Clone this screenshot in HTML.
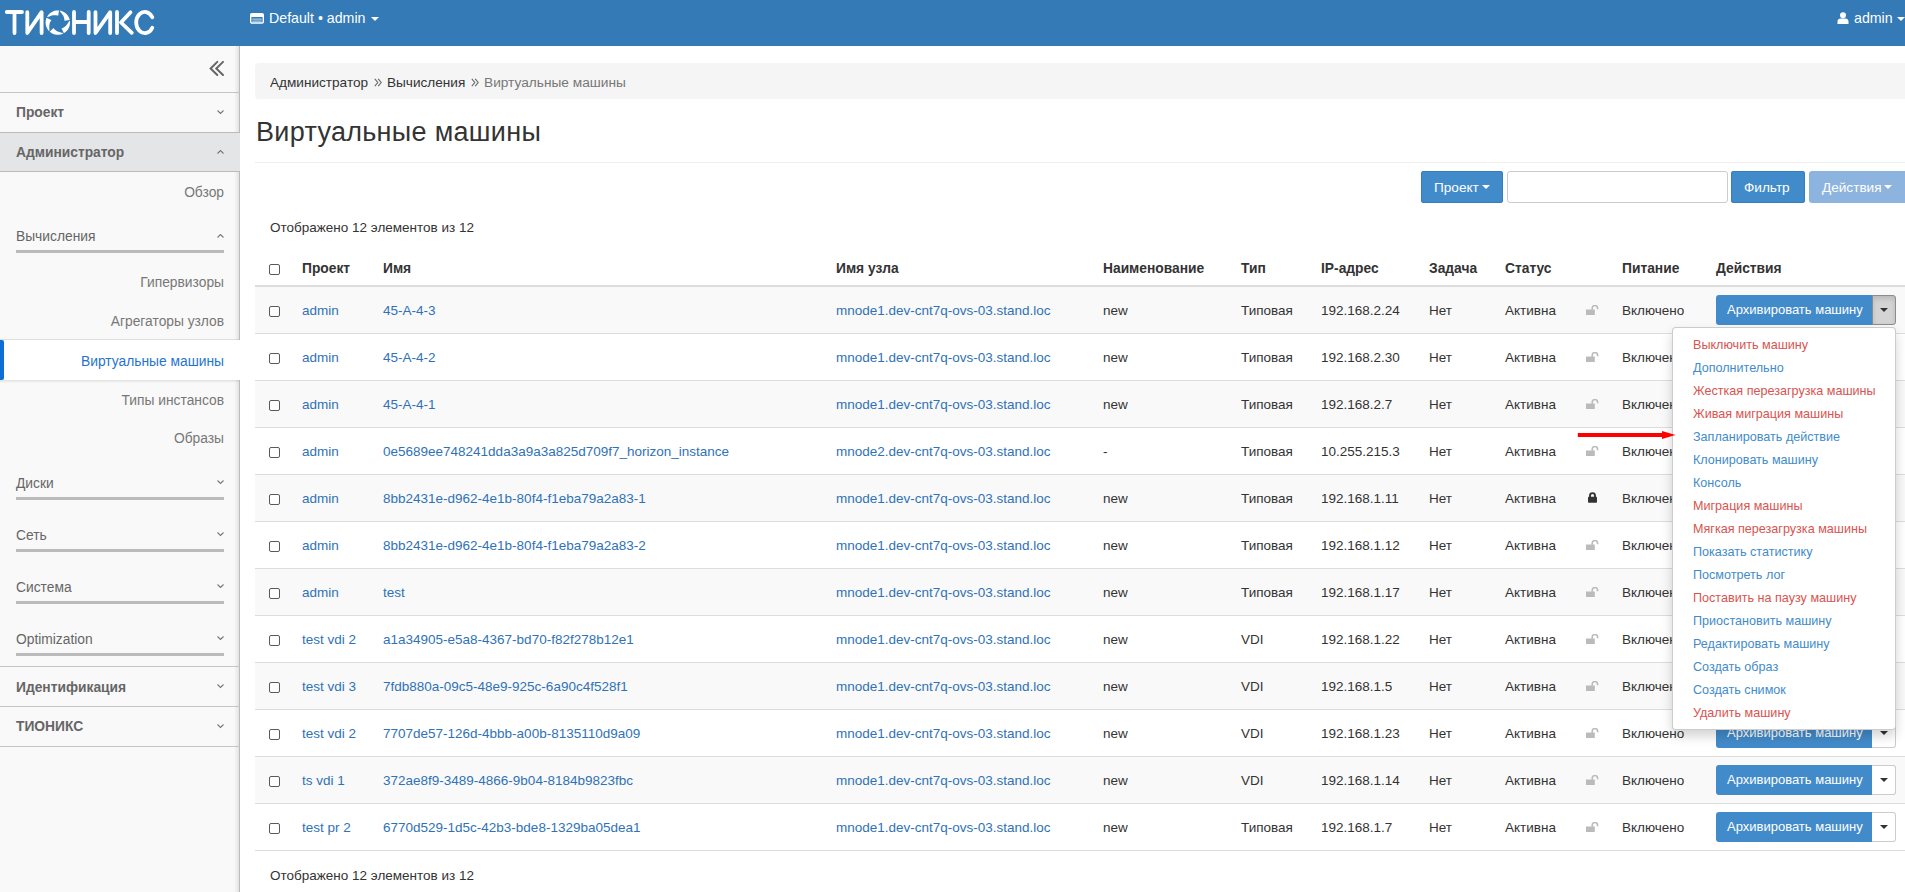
<!DOCTYPE html>
<html><head><meta charset="utf-8"><title>Виртуальные машины</title>
<style>
html,body{margin:0;padding:0;}
body{width:1905px;height:892px;overflow:hidden;position:relative;background:#fff;font-family:"Liberation Sans", sans-serif;}
.t{position:absolute;white-space:nowrap;line-height:1.15;}
</style></head><body>
<div style="position:absolute;left:0px;top:0px;width:1905px;height:46px;background:#337ab7"></div><svg style="position:absolute;left:0;top:0" width="170" height="46" viewBox="0 0 170 46">
<g stroke="#fff" stroke-width="3.8" stroke-linecap="round" stroke-linejoin="round" fill="none">
<path d="M6.8,12 H22 M14.5,12 V33"/>
<path d="M27.3,12.2 V33 L41.6,12.2 V33"/>
<path d="M74,12 V33 M88.7,12 V33 M74,22 H88.7"/>
<path d="M95.5,12.2 V33 L110.2,12.2 V33"/>
<path d="M117,12 V33 M130.5,12.3 L121,22.5 L131.8,32.8"/>
<path d="M152.3,17.3 A8.6,10.6 0 1 0 152.3,27.7"/>
</g>
<path fill="#fff" d="M46.93,17.06 L47.45,16.15 L48.04,15.28 L48.70,14.47 L49.44,13.72 L50.23,13.03 L51.08,12.42 L51.98,11.88 L52.92,11.42 L53.90,11.04 L54.91,10.75 L55.94,10.54 L56.98,10.43 L58.03,10.40 L59.08,10.47 L58.16,15.81 L57.59,15.59 L56.99,15.41 L56.36,15.27 L55.69,15.18 L55.00,15.14 L54.28,15.16 L53.54,15.23 L52.78,15.36 L52.00,15.54 L51.19,15.79 L50.36,16.10 L49.47,16.46 L48.50,16.85 L46.93,17.06Z M59.71,10.55 L60.74,10.76 L61.74,11.05 L62.72,11.44 L63.66,11.90 L64.56,12.44 L65.41,13.06 L66.20,13.75 L66.93,14.50 L67.59,15.32 L68.18,16.19 L68.69,17.10 L69.12,18.06 L69.47,19.05 L69.73,20.06 L64.37,20.84 L64.40,20.23 L64.39,19.61 L64.33,18.96 L64.20,18.30 L64.03,17.63 L63.79,16.96 L63.50,16.27 L63.14,15.59 L62.72,14.90 L62.23,14.21 L61.69,13.51 L61.07,12.78 L60.39,11.98 L59.71,10.55Z M69.85,20.69 L69.97,21.73 L70.00,22.78 L69.94,23.83 L69.79,24.87 L69.55,25.89 L69.22,26.89 L68.81,27.85 L68.32,28.78 L67.75,29.66 L67.11,30.49 L66.39,31.26 L65.62,31.97 L64.79,32.60 L63.90,33.17 L61.50,28.30 L62.09,28.15 L62.68,27.94 L63.28,27.68 L63.87,27.36 L64.45,26.99 L65.02,26.55 L65.58,26.06 L66.12,25.51 L66.64,24.90 L67.15,24.22 L67.65,23.49 L68.15,22.68 L68.70,21.78 L69.85,20.69Z M63.34,33.47 L62.38,33.91 L61.40,34.26 L60.38,34.52 L59.35,34.70 L58.30,34.79 L57.25,34.79 L56.21,34.70 L55.17,34.51 L54.16,34.24 L53.17,33.89 L52.22,33.45 L51.31,32.93 L50.45,32.33 L49.64,31.67 L53.52,27.88 L53.85,28.40 L54.23,28.90 L54.66,29.38 L55.14,29.84 L55.68,30.28 L56.27,30.69 L56.91,31.07 L57.60,31.41 L58.35,31.72 L59.14,31.99 L60.00,32.24 L60.92,32.47 L61.95,32.72 L63.34,33.47Z M49.17,31.23 L48.46,30.45 L47.82,29.62 L47.26,28.74 L46.77,27.81 L46.36,26.84 L46.04,25.85 L45.80,24.82 L45.66,23.78 L45.60,22.74 L45.63,21.69 L45.76,20.65 L45.97,19.62 L46.27,18.61 L46.65,17.64 L51.45,20.16 L51.07,20.63 L50.71,21.15 L50.38,21.71 L50.09,22.31 L49.84,22.96 L49.64,23.64 L49.47,24.37 L49.36,25.13 L49.30,25.94 L49.28,26.78 L49.31,27.67 L49.38,28.62 L49.46,29.67 L49.17,31.23Z"/>
</svg><svg style="position:absolute;left:250px;top:12.6px" width="14" height="11" viewBox="0 0 14 11"><rect x="0.7" y="0.7" width="12.6" height="9.3" rx="1.2" fill="none" stroke="#fff" stroke-width="1.4"/><rect x="0.7" y="0.7" width="12.6" height="3.2" rx="1" fill="#fff"/><rect x="2.3" y="5.6" width="9.4" height="1" fill="#fff" opacity="0.75"/><rect x="2.3" y="7.6" width="9.4" height="1" fill="#fff" opacity="0.75"/></svg><div class="t" style="left:269px;top:10.31px;font-size:14.2px;color:#fff;font-weight:normal;">Default • admin</div><div style="position:absolute;left:371px;top:16.8px;width:0;height:0;border-left:4px solid transparent;border-right:4px solid transparent;border-top:4px solid #fff"></div><svg style="position:absolute;left:1837px;top:12px" width="12" height="12" viewBox="0 0 12 12"><circle cx="6" cy="3.2" r="3" fill="#fff"/><path d="M0.5,12 V9.5 C0.5,7.5 2,6.5 3.5,6.5 H8.5 C10,6.5 11.5,7.5 11.5,9.5 V12 Z" fill="#fff"/></svg><div class="t" style="left:1854px;top:10.21px;font-size:14.2px;color:#fff;font-weight:normal;">admin</div><div style="position:absolute;left:1896.8px;top:16.8px;width:0;height:0;border-left:4px solid transparent;border-right:4px solid transparent;border-top:4px solid #fff"></div><div style="position:absolute;left:0px;top:46px;width:239px;height:846px;background:#f9f9f9"></div><div style="position:absolute;left:239px;top:46px;width:1px;height:846px;background:#bbb"></div><div style="position:absolute;left:234px;top:46px;width:5px;height:846px;background:linear-gradient(to right, rgba(0,0,0,0), rgba(0,0,0,0.09))"></div><svg style="position:absolute;left:209px;top:60px" width="17" height="17" viewBox="0 0 17 17"><g stroke="#666" stroke-width="2" fill="none" stroke-linecap="round"><path d="M8.3,1.9 L1.6,8.45 L8.3,15"/><path d="M14,1.9 L7.3,8.45 L14,15"/></g></svg><div style="position:absolute;left:0px;top:92px;width:240px;height:1px;background:#c4c4c4"></div><div class="t" style="left:16px;top:105.08px;font-size:13.8px;color:#666;font-weight:bold;">Проект</div><svg style="position:absolute;left:217px;top:109.5px" width="7" height="4.5" viewBox="0 0 7 4.5"><path d="M0.5,0.5 L3.5,3.5 L6.5,0.5" stroke="#777" stroke-width="1.1" fill="none"/></svg><div style="position:absolute;left:0px;top:132px;width:240px;height:1px;background:#bbb"></div><div style="position:absolute;left:0px;top:133px;width:240px;height:38px;background:#e4e5e7"></div><div class="t" style="left:16px;top:144.98px;font-size:13.8px;color:#666;font-weight:bold;">Администратор</div><svg style="position:absolute;left:217px;top:149.5px" width="7" height="4.5" viewBox="0 0 7 4.5"><path d="M0.5,3.5 L3.5,0.5 L6.5,3.5" stroke="#777" stroke-width="1.1" fill="none"/></svg><div style="position:absolute;left:0px;top:171px;width:240px;height:1px;background:#bbb"></div><div class="t" style="right:1681px;top:184.78px;font-size:13.8px;color:#777;font-weight:normal;">Обзор</div><div class="t" style="left:16px;top:228.98px;font-size:13.8px;color:#666;font-weight:normal;">Вычисления</div><svg style="position:absolute;left:217px;top:233.5px" width="7" height="4.5" viewBox="0 0 7 4.5"><path d="M0.5,3.5 L3.5,0.5 L6.5,3.5" stroke="#777" stroke-width="1.1" fill="none"/></svg><div style="position:absolute;left:16px;top:250px;width:208px;height:3px;background:#bbb"></div><div class="t" style="right:1681px;top:274.78px;font-size:13.8px;color:#777;font-weight:normal;">Гипервизоры</div><div class="t" style="right:1681px;top:313.78px;font-size:13.8px;color:#777;font-weight:normal;">Агрегаторы узлов</div><div style="position:absolute;left:0px;top:340px;width:256px;height:40px;background:#fff"></div><div style="position:absolute;left:0px;top:339px;width:239px;height:1px;background:rgba(0,0,0,.10)"></div><div style="position:absolute;left:0px;top:380px;width:239px;height:3px;background:linear-gradient(rgba(0,0,0,.10),rgba(0,0,0,0))"></div><div style="position:absolute;left:0px;top:340px;width:4px;height:40px;background:#0d6fd6;border-radius:0 2px 2px 0"></div><div class="t" style="right:1681px;top:353.58px;font-size:13.8px;color:#1f74d1;font-weight:normal;">Виртуальные машины</div><div class="t" style="right:1681px;top:393.18px;font-size:13.8px;color:#777;font-weight:normal;">Типы инстансов</div><div class="t" style="right:1681px;top:431.38px;font-size:13.8px;color:#777;font-weight:normal;">Образы</div><div class="t" style="left:16px;top:476.08px;font-size:13.8px;color:#666;font-weight:normal;">Диски</div><svg style="position:absolute;left:217px;top:480.1px" width="7" height="4.5" viewBox="0 0 7 4.5"><path d="M0.5,0.5 L3.5,3.5 L6.5,0.5" stroke="#777" stroke-width="1.1" fill="none"/></svg><div style="position:absolute;left:16px;top:497px;width:208px;height:3px;background:#bbb"></div><div class="t" style="left:16px;top:528.28px;font-size:13.8px;color:#666;font-weight:normal;">Сеть</div><svg style="position:absolute;left:217px;top:532.3px" width="7" height="4.5" viewBox="0 0 7 4.5"><path d="M0.5,0.5 L3.5,3.5 L6.5,0.5" stroke="#777" stroke-width="1.1" fill="none"/></svg><div style="position:absolute;left:16px;top:549px;width:208px;height:3px;background:#bbb"></div><div class="t" style="left:16px;top:579.68px;font-size:13.8px;color:#666;font-weight:normal;">Система</div><svg style="position:absolute;left:217px;top:583.7px" width="7" height="4.5" viewBox="0 0 7 4.5"><path d="M0.5,0.5 L3.5,3.5 L6.5,0.5" stroke="#777" stroke-width="1.1" fill="none"/></svg><div style="position:absolute;left:16px;top:601px;width:208px;height:3px;background:#bbb"></div><div class="t" style="left:16px;top:631.88px;font-size:13.8px;color:#666;font-weight:normal;">Optimization</div><svg style="position:absolute;left:217px;top:635.9px" width="7" height="4.5" viewBox="0 0 7 4.5"><path d="M0.5,0.5 L3.5,3.5 L6.5,0.5" stroke="#777" stroke-width="1.1" fill="none"/></svg><div style="position:absolute;left:16px;top:653px;width:208px;height:3px;background:#bbb"></div><div style="position:absolute;left:0px;top:666px;width:240px;height:1px;background:#c4c4c4"></div><div class="t" style="left:16px;top:679.68px;font-size:13.8px;color:#666;font-weight:bold;">Идентификация</div><svg style="position:absolute;left:217px;top:684px" width="7" height="4.5" viewBox="0 0 7 4.5"><path d="M0.5,0.5 L3.5,3.5 L6.5,0.5" stroke="#777" stroke-width="1.1" fill="none"/></svg><div style="position:absolute;left:0px;top:706px;width:240px;height:1px;background:#c4c4c4"></div><div class="t" style="left:16px;top:719.38px;font-size:13.8px;color:#666;font-weight:bold;">ТИОНИКС</div><svg style="position:absolute;left:217px;top:724px" width="7" height="4.5" viewBox="0 0 7 4.5"><path d="M0.5,0.5 L3.5,3.5 L6.5,0.5" stroke="#777" stroke-width="1.1" fill="none"/></svg><div style="position:absolute;left:0px;top:746px;width:240px;height:1px;background:#c4c4c4"></div><div style="position:absolute;left:255px;top:63px;width:1680px;height:36px;background:#f5f5f5;border-radius:4px"></div><div class="t" style="left:270px;top:75.27px;font-size:13.6px;color:#333;font-weight:normal;">Администратор</div><svg style="position:absolute;left:374px;top:78px" width="8" height="9" viewBox="0 0 8 9"><g stroke="#666" stroke-width="1.1" fill="none"><path d="M0.8,0.8 L3.8,4.5 L0.8,8.2"/><path d="M4.2,0.8 L7.2,4.5 L4.2,8.2"/></g></svg><div class="t" style="left:387px;top:75.27px;font-size:13.6px;color:#333;font-weight:normal;">Вычисления</div><svg style="position:absolute;left:471px;top:78px" width="8" height="9" viewBox="0 0 8 9"><g stroke="#666" stroke-width="1.1" fill="none"><path d="M0.8,0.8 L3.8,4.5 L0.8,8.2"/><path d="M4.2,0.8 L7.2,4.5 L4.2,8.2"/></g></svg><div class="t" style="left:484px;top:75.18px;font-size:13.7px;color:#777;font-weight:normal;">Виртуальные машины</div><div class="t" style="left:256px;top:116.92px;font-size:27px;color:#333;font-weight:normal;letter-spacing:0.3px">Виртуальные машины</div><div style="position:absolute;left:255px;top:162px;width:1680px;height:1px;background:#eee"></div><div style="position:absolute;left:1421px;top:171px;width:82px;height:32px;background:#428bca;border-radius:3px;box-shadow:inset 0 0 0 1px #357ebd"></div><div class="t" style="left:1434px;top:180.47px;font-size:13.6px;color:#fff;font-weight:normal;">Проект</div><div style="position:absolute;left:1482px;top:185px;border-left:4px solid transparent;border-right:4px solid transparent;border-top:4px solid #fff"></div><div style="position:absolute;left:1507px;top:171px;width:221px;height:32px;box-sizing:border-box;border:1px solid #ccc;border-radius:3px;background:#fff"></div><div style="position:absolute;left:1731px;top:171px;width:74px;height:32px;background:#428bca;border-radius:3px;box-shadow:inset 0 0 0 1px #357ebd"></div><div class="t" style="left:1744px;top:180.47px;font-size:13.6px;color:#fff;font-weight:normal;">Фильтр</div><div style="position:absolute;left:1809px;top:171px;width:110px;height:32px;background:#8db4de;border-radius:3px"></div><div class="t" style="left:1822px;top:180.47px;font-size:13.6px;color:#fff;font-weight:normal;">Действия</div><div style="position:absolute;left:1884px;top:185px;border-left:4px solid transparent;border-right:4px solid transparent;border-top:4px solid #fff"></div><div class="t" style="left:270px;top:219.86px;font-size:13.5px;color:#333;font-weight:normal;">Отображено 12 элементов из 12</div><div style="position:absolute;left:269.3px;top:264.3px;width:10.5px;height:10.5px;box-sizing:border-box;border:1px solid #5a5a5a;border-radius:2px;background:#fff"></div><div class="t" style="left:302px;top:261.28px;font-size:13.8px;color:#333;font-weight:bold;">Проект</div><div class="t" style="left:383px;top:261.28px;font-size:13.8px;color:#333;font-weight:bold;">Имя</div><div class="t" style="left:836px;top:261.28px;font-size:13.8px;color:#333;font-weight:bold;">Имя узла</div><div class="t" style="left:1103px;top:261.28px;font-size:13.8px;color:#333;font-weight:bold;">Наименование</div><div class="t" style="left:1241px;top:261.28px;font-size:13.8px;color:#333;font-weight:bold;">Тип</div><div class="t" style="left:1321px;top:261.28px;font-size:13.8px;color:#333;font-weight:bold;">IP-адрес</div><div class="t" style="left:1429px;top:261.28px;font-size:13.8px;color:#333;font-weight:bold;">Задача</div><div class="t" style="left:1505px;top:261.28px;font-size:13.8px;color:#333;font-weight:bold;">Статус</div><div class="t" style="left:1622px;top:261.28px;font-size:13.8px;color:#333;font-weight:bold;">Питание</div><div class="t" style="left:1716px;top:261.28px;font-size:13.8px;color:#333;font-weight:bold;">Действия</div><div style="position:absolute;left:255px;top:285px;width:1680px;height:2px;background:#ddd"></div><div style="position:absolute;left:255px;top:287px;width:1680px;height:46px;background:#f9f9f9"></div><div style="position:absolute;left:255px;top:333px;width:1680px;height:1px;background:#ddd"></div><div style="position:absolute;left:269.3px;top:306.3px;width:10.5px;height:10.5px;box-sizing:border-box;border:1px solid #5a5a5a;border-radius:2px;background:#fff"></div><div class="t" style="left:302px;top:303.26px;font-size:13.5px;color:#2f72b6;font-weight:normal;">admin</div><div class="t" style="left:383px;top:303.26px;font-size:13.5px;color:#2f72b6;font-weight:normal;">45-A-4-3</div><div class="t" style="left:836px;top:303.26px;font-size:13.5px;color:#2f72b6;font-weight:normal;">mnode1.dev-cnt7q-ovs-03.stand.loc</div><div class="t" style="left:1103px;top:303.26px;font-size:13.5px;color:#333;font-weight:normal;">new</div><div class="t" style="left:1241px;top:303.26px;font-size:13.5px;color:#333;font-weight:normal;">Типовая</div><div class="t" style="left:1321px;top:303.26px;font-size:13.5px;color:#333;font-weight:normal;">192.168.2.24</div><div class="t" style="left:1429px;top:303.26px;font-size:13.5px;color:#333;font-weight:normal;">Нет</div><div class="t" style="left:1505px;top:303.26px;font-size:13.5px;color:#333;font-weight:normal;">Активна</div><svg style="position:absolute;left:1586px;top:304.6px" width="13" height="10" viewBox="0 0 13 10"><rect x="0" y="4.5" width="8.8" height="5.5" fill="#bbb"/><path d="M6.2,4.8 V3.2 A2.7,2.7 0 0 1 11.6,3.2 V4.3" stroke="#bbb" stroke-width="1.6" fill="none"/></svg><div class="t" style="left:1622px;top:303.26px;font-size:13.5px;color:#333;font-weight:normal;">Включено</div><div style="position:absolute;left:1716px;top:295px;width:157px;height:30px;background:#428bca;border-radius:3px 0 0 3px"></div><div class="t" style="left:1727px;top:303.02px;font-size:13.0px;color:#fff;font-weight:normal;">Архивировать машину</div><div style="position:absolute;left:1872px;top:295px;width:24px;height:30px;box-sizing:border-box;background:#d4d4d4;border:1px solid #ccc;border-left:none;border-radius:0 3px 3px 0;box-shadow:inset 0 3px 5px rgba(0,0,0,.125);border:1px solid #8c8c8c"></div><div style="position:absolute;left:1880px;top:308px;border-left:4px solid transparent;border-right:4px solid transparent;border-top:4px solid #333"></div><div style="position:absolute;left:255px;top:380px;width:1680px;height:1px;background:#ddd"></div><div style="position:absolute;left:269.3px;top:353.3px;width:10.5px;height:10.5px;box-sizing:border-box;border:1px solid #5a5a5a;border-radius:2px;background:#fff"></div><div class="t" style="left:302px;top:350.26px;font-size:13.5px;color:#2f72b6;font-weight:normal;">admin</div><div class="t" style="left:383px;top:350.26px;font-size:13.5px;color:#2f72b6;font-weight:normal;">45-A-4-2</div><div class="t" style="left:836px;top:350.26px;font-size:13.5px;color:#2f72b6;font-weight:normal;">mnode1.dev-cnt7q-ovs-03.stand.loc</div><div class="t" style="left:1103px;top:350.26px;font-size:13.5px;color:#333;font-weight:normal;">new</div><div class="t" style="left:1241px;top:350.26px;font-size:13.5px;color:#333;font-weight:normal;">Типовая</div><div class="t" style="left:1321px;top:350.26px;font-size:13.5px;color:#333;font-weight:normal;">192.168.2.30</div><div class="t" style="left:1429px;top:350.26px;font-size:13.5px;color:#333;font-weight:normal;">Нет</div><div class="t" style="left:1505px;top:350.26px;font-size:13.5px;color:#333;font-weight:normal;">Активна</div><svg style="position:absolute;left:1586px;top:351.6px" width="13" height="10" viewBox="0 0 13 10"><rect x="0" y="4.5" width="8.8" height="5.5" fill="#bbb"/><path d="M6.2,4.8 V3.2 A2.7,2.7 0 0 1 11.6,3.2 V4.3" stroke="#bbb" stroke-width="1.6" fill="none"/></svg><div class="t" style="left:1622px;top:350.26px;font-size:13.5px;color:#333;font-weight:normal;">Включено</div><div style="position:absolute;left:1716px;top:342px;width:157px;height:30px;background:#428bca;border-radius:3px 0 0 3px"></div><div class="t" style="left:1727px;top:350.02px;font-size:13.0px;color:#fff;font-weight:normal;">Архивировать машину</div><div style="position:absolute;left:1872px;top:342px;width:24px;height:30px;box-sizing:border-box;background:#fff;border:1px solid #ccc;border-left:none;border-radius:0 3px 3px 0;"></div><div style="position:absolute;left:1880px;top:355px;border-left:4px solid transparent;border-right:4px solid transparent;border-top:4px solid #333"></div><div style="position:absolute;left:255px;top:381px;width:1680px;height:46px;background:#f9f9f9"></div><div style="position:absolute;left:255px;top:427px;width:1680px;height:1px;background:#ddd"></div><div style="position:absolute;left:269.3px;top:400.3px;width:10.5px;height:10.5px;box-sizing:border-box;border:1px solid #5a5a5a;border-radius:2px;background:#fff"></div><div class="t" style="left:302px;top:397.26px;font-size:13.5px;color:#2f72b6;font-weight:normal;">admin</div><div class="t" style="left:383px;top:397.26px;font-size:13.5px;color:#2f72b6;font-weight:normal;">45-A-4-1</div><div class="t" style="left:836px;top:397.26px;font-size:13.5px;color:#2f72b6;font-weight:normal;">mnode1.dev-cnt7q-ovs-03.stand.loc</div><div class="t" style="left:1103px;top:397.26px;font-size:13.5px;color:#333;font-weight:normal;">new</div><div class="t" style="left:1241px;top:397.26px;font-size:13.5px;color:#333;font-weight:normal;">Типовая</div><div class="t" style="left:1321px;top:397.26px;font-size:13.5px;color:#333;font-weight:normal;">192.168.2.7</div><div class="t" style="left:1429px;top:397.26px;font-size:13.5px;color:#333;font-weight:normal;">Нет</div><div class="t" style="left:1505px;top:397.26px;font-size:13.5px;color:#333;font-weight:normal;">Активна</div><svg style="position:absolute;left:1586px;top:398.6px" width="13" height="10" viewBox="0 0 13 10"><rect x="0" y="4.5" width="8.8" height="5.5" fill="#bbb"/><path d="M6.2,4.8 V3.2 A2.7,2.7 0 0 1 11.6,3.2 V4.3" stroke="#bbb" stroke-width="1.6" fill="none"/></svg><div class="t" style="left:1622px;top:397.26px;font-size:13.5px;color:#333;font-weight:normal;">Включено</div><div style="position:absolute;left:1716px;top:389px;width:157px;height:30px;background:#428bca;border-radius:3px 0 0 3px"></div><div class="t" style="left:1727px;top:397.02px;font-size:13.0px;color:#fff;font-weight:normal;">Архивировать машину</div><div style="position:absolute;left:1872px;top:389px;width:24px;height:30px;box-sizing:border-box;background:#fff;border:1px solid #ccc;border-left:none;border-radius:0 3px 3px 0;"></div><div style="position:absolute;left:1880px;top:402px;border-left:4px solid transparent;border-right:4px solid transparent;border-top:4px solid #333"></div><div style="position:absolute;left:255px;top:474px;width:1680px;height:1px;background:#ddd"></div><div style="position:absolute;left:269.3px;top:447.3px;width:10.5px;height:10.5px;box-sizing:border-box;border:1px solid #5a5a5a;border-radius:2px;background:#fff"></div><div class="t" style="left:302px;top:444.26px;font-size:13.5px;color:#2f72b6;font-weight:normal;">admin</div><div class="t" style="left:383px;top:444.26px;font-size:13.5px;color:#2f72b6;font-weight:normal;">0e5689ee748241dda3a9a3a825d709f7_horizon_instance</div><div class="t" style="left:836px;top:444.26px;font-size:13.5px;color:#2f72b6;font-weight:normal;">mnode2.dev-cnt7q-ovs-03.stand.loc</div><div class="t" style="left:1103px;top:444.26px;font-size:13.5px;color:#333;font-weight:normal;">-</div><div class="t" style="left:1241px;top:444.26px;font-size:13.5px;color:#333;font-weight:normal;">Типовая</div><div class="t" style="left:1321px;top:444.26px;font-size:13.5px;color:#333;font-weight:normal;">10.255.215.3</div><div class="t" style="left:1429px;top:444.26px;font-size:13.5px;color:#333;font-weight:normal;">Нет</div><div class="t" style="left:1505px;top:444.26px;font-size:13.5px;color:#333;font-weight:normal;">Активна</div><svg style="position:absolute;left:1586px;top:445.6px" width="13" height="10" viewBox="0 0 13 10"><rect x="0" y="4.5" width="8.8" height="5.5" fill="#bbb"/><path d="M6.2,4.8 V3.2 A2.7,2.7 0 0 1 11.6,3.2 V4.3" stroke="#bbb" stroke-width="1.6" fill="none"/></svg><div class="t" style="left:1622px;top:444.26px;font-size:13.5px;color:#333;font-weight:normal;">Включено</div><div style="position:absolute;left:1716px;top:436px;width:157px;height:30px;background:#428bca;border-radius:3px 0 0 3px"></div><div class="t" style="left:1727px;top:444.02px;font-size:13.0px;color:#fff;font-weight:normal;">Архивировать машину</div><div style="position:absolute;left:1872px;top:436px;width:24px;height:30px;box-sizing:border-box;background:#fff;border:1px solid #ccc;border-left:none;border-radius:0 3px 3px 0;"></div><div style="position:absolute;left:1880px;top:449px;border-left:4px solid transparent;border-right:4px solid transparent;border-top:4px solid #333"></div><div style="position:absolute;left:255px;top:475px;width:1680px;height:46px;background:#f9f9f9"></div><div style="position:absolute;left:255px;top:521px;width:1680px;height:1px;background:#ddd"></div><div style="position:absolute;left:269.3px;top:494.3px;width:10.5px;height:10.5px;box-sizing:border-box;border:1px solid #5a5a5a;border-radius:2px;background:#fff"></div><div class="t" style="left:302px;top:491.26px;font-size:13.5px;color:#2f72b6;font-weight:normal;">admin</div><div class="t" style="left:383px;top:491.26px;font-size:13.5px;color:#2f72b6;font-weight:normal;">8bb2431e-d962-4e1b-80f4-f1eba79a2a83-1</div><div class="t" style="left:836px;top:491.26px;font-size:13.5px;color:#2f72b6;font-weight:normal;">mnode1.dev-cnt7q-ovs-03.stand.loc</div><div class="t" style="left:1103px;top:491.26px;font-size:13.5px;color:#333;font-weight:normal;">new</div><div class="t" style="left:1241px;top:491.26px;font-size:13.5px;color:#333;font-weight:normal;">Типовая</div><div class="t" style="left:1321px;top:491.26px;font-size:13.5px;color:#333;font-weight:normal;">192.168.1.11</div><div class="t" style="left:1429px;top:491.26px;font-size:13.5px;color:#333;font-weight:normal;">Нет</div><div class="t" style="left:1505px;top:491.26px;font-size:13.5px;color:#333;font-weight:normal;">Активна</div><svg style="position:absolute;left:1587px;top:492px" width="11" height="11" viewBox="0 0 11 11"><rect x="1" y="4.8" width="9" height="6" rx="0.8" fill="#333"/><path d="M3,5 V3.6 A2.5,2.5 0 0 1 8,3.6 V5" stroke="#333" stroke-width="1.9" fill="none"/></svg><div class="t" style="left:1622px;top:491.26px;font-size:13.5px;color:#333;font-weight:normal;">Включено</div><div style="position:absolute;left:1716px;top:483px;width:157px;height:30px;background:#428bca;border-radius:3px 0 0 3px"></div><div class="t" style="left:1727px;top:491.02px;font-size:13.0px;color:#fff;font-weight:normal;">Архивировать машину</div><div style="position:absolute;left:1872px;top:483px;width:24px;height:30px;box-sizing:border-box;background:#fff;border:1px solid #ccc;border-left:none;border-radius:0 3px 3px 0;"></div><div style="position:absolute;left:1880px;top:496px;border-left:4px solid transparent;border-right:4px solid transparent;border-top:4px solid #333"></div><div style="position:absolute;left:255px;top:568px;width:1680px;height:1px;background:#ddd"></div><div style="position:absolute;left:269.3px;top:541.3px;width:10.5px;height:10.5px;box-sizing:border-box;border:1px solid #5a5a5a;border-radius:2px;background:#fff"></div><div class="t" style="left:302px;top:538.26px;font-size:13.5px;color:#2f72b6;font-weight:normal;">admin</div><div class="t" style="left:383px;top:538.26px;font-size:13.5px;color:#2f72b6;font-weight:normal;">8bb2431e-d962-4e1b-80f4-f1eba79a2a83-2</div><div class="t" style="left:836px;top:538.26px;font-size:13.5px;color:#2f72b6;font-weight:normal;">mnode1.dev-cnt7q-ovs-03.stand.loc</div><div class="t" style="left:1103px;top:538.26px;font-size:13.5px;color:#333;font-weight:normal;">new</div><div class="t" style="left:1241px;top:538.26px;font-size:13.5px;color:#333;font-weight:normal;">Типовая</div><div class="t" style="left:1321px;top:538.26px;font-size:13.5px;color:#333;font-weight:normal;">192.168.1.12</div><div class="t" style="left:1429px;top:538.26px;font-size:13.5px;color:#333;font-weight:normal;">Нет</div><div class="t" style="left:1505px;top:538.26px;font-size:13.5px;color:#333;font-weight:normal;">Активна</div><svg style="position:absolute;left:1586px;top:539.6px" width="13" height="10" viewBox="0 0 13 10"><rect x="0" y="4.5" width="8.8" height="5.5" fill="#bbb"/><path d="M6.2,4.8 V3.2 A2.7,2.7 0 0 1 11.6,3.2 V4.3" stroke="#bbb" stroke-width="1.6" fill="none"/></svg><div class="t" style="left:1622px;top:538.26px;font-size:13.5px;color:#333;font-weight:normal;">Включено</div><div style="position:absolute;left:1716px;top:530px;width:157px;height:30px;background:#428bca;border-radius:3px 0 0 3px"></div><div class="t" style="left:1727px;top:538.02px;font-size:13.0px;color:#fff;font-weight:normal;">Архивировать машину</div><div style="position:absolute;left:1872px;top:530px;width:24px;height:30px;box-sizing:border-box;background:#fff;border:1px solid #ccc;border-left:none;border-radius:0 3px 3px 0;"></div><div style="position:absolute;left:1880px;top:543px;border-left:4px solid transparent;border-right:4px solid transparent;border-top:4px solid #333"></div><div style="position:absolute;left:255px;top:569px;width:1680px;height:46px;background:#f9f9f9"></div><div style="position:absolute;left:255px;top:615px;width:1680px;height:1px;background:#ddd"></div><div style="position:absolute;left:269.3px;top:588.3px;width:10.5px;height:10.5px;box-sizing:border-box;border:1px solid #5a5a5a;border-radius:2px;background:#fff"></div><div class="t" style="left:302px;top:585.26px;font-size:13.5px;color:#2f72b6;font-weight:normal;">admin</div><div class="t" style="left:383px;top:585.26px;font-size:13.5px;color:#2f72b6;font-weight:normal;">test</div><div class="t" style="left:836px;top:585.26px;font-size:13.5px;color:#2f72b6;font-weight:normal;">mnode1.dev-cnt7q-ovs-03.stand.loc</div><div class="t" style="left:1103px;top:585.26px;font-size:13.5px;color:#333;font-weight:normal;">new</div><div class="t" style="left:1241px;top:585.26px;font-size:13.5px;color:#333;font-weight:normal;">Типовая</div><div class="t" style="left:1321px;top:585.26px;font-size:13.5px;color:#333;font-weight:normal;">192.168.1.17</div><div class="t" style="left:1429px;top:585.26px;font-size:13.5px;color:#333;font-weight:normal;">Нет</div><div class="t" style="left:1505px;top:585.26px;font-size:13.5px;color:#333;font-weight:normal;">Активна</div><svg style="position:absolute;left:1586px;top:586.6px" width="13" height="10" viewBox="0 0 13 10"><rect x="0" y="4.5" width="8.8" height="5.5" fill="#bbb"/><path d="M6.2,4.8 V3.2 A2.7,2.7 0 0 1 11.6,3.2 V4.3" stroke="#bbb" stroke-width="1.6" fill="none"/></svg><div class="t" style="left:1622px;top:585.26px;font-size:13.5px;color:#333;font-weight:normal;">Включено</div><div style="position:absolute;left:1716px;top:577px;width:157px;height:30px;background:#428bca;border-radius:3px 0 0 3px"></div><div class="t" style="left:1727px;top:585.02px;font-size:13.0px;color:#fff;font-weight:normal;">Архивировать машину</div><div style="position:absolute;left:1872px;top:577px;width:24px;height:30px;box-sizing:border-box;background:#fff;border:1px solid #ccc;border-left:none;border-radius:0 3px 3px 0;"></div><div style="position:absolute;left:1880px;top:590px;border-left:4px solid transparent;border-right:4px solid transparent;border-top:4px solid #333"></div><div style="position:absolute;left:255px;top:662px;width:1680px;height:1px;background:#ddd"></div><div style="position:absolute;left:269.3px;top:635.3px;width:10.5px;height:10.5px;box-sizing:border-box;border:1px solid #5a5a5a;border-radius:2px;background:#fff"></div><div class="t" style="left:302px;top:632.26px;font-size:13.5px;color:#2f72b6;font-weight:normal;">test vdi 2</div><div class="t" style="left:383px;top:632.26px;font-size:13.5px;color:#2f72b6;font-weight:normal;">a1a34905-e5a8-4367-bd70-f82f278b12e1</div><div class="t" style="left:836px;top:632.26px;font-size:13.5px;color:#2f72b6;font-weight:normal;">mnode1.dev-cnt7q-ovs-03.stand.loc</div><div class="t" style="left:1103px;top:632.26px;font-size:13.5px;color:#333;font-weight:normal;">new</div><div class="t" style="left:1241px;top:632.26px;font-size:13.5px;color:#333;font-weight:normal;">VDI</div><div class="t" style="left:1321px;top:632.26px;font-size:13.5px;color:#333;font-weight:normal;">192.168.1.22</div><div class="t" style="left:1429px;top:632.26px;font-size:13.5px;color:#333;font-weight:normal;">Нет</div><div class="t" style="left:1505px;top:632.26px;font-size:13.5px;color:#333;font-weight:normal;">Активна</div><svg style="position:absolute;left:1586px;top:633.6px" width="13" height="10" viewBox="0 0 13 10"><rect x="0" y="4.5" width="8.8" height="5.5" fill="#bbb"/><path d="M6.2,4.8 V3.2 A2.7,2.7 0 0 1 11.6,3.2 V4.3" stroke="#bbb" stroke-width="1.6" fill="none"/></svg><div class="t" style="left:1622px;top:632.26px;font-size:13.5px;color:#333;font-weight:normal;">Включено</div><div style="position:absolute;left:1716px;top:624px;width:157px;height:30px;background:#428bca;border-radius:3px 0 0 3px"></div><div class="t" style="left:1727px;top:632.02px;font-size:13.0px;color:#fff;font-weight:normal;">Архивировать машину</div><div style="position:absolute;left:1872px;top:624px;width:24px;height:30px;box-sizing:border-box;background:#fff;border:1px solid #ccc;border-left:none;border-radius:0 3px 3px 0;"></div><div style="position:absolute;left:1880px;top:637px;border-left:4px solid transparent;border-right:4px solid transparent;border-top:4px solid #333"></div><div style="position:absolute;left:255px;top:663px;width:1680px;height:46px;background:#f9f9f9"></div><div style="position:absolute;left:255px;top:709px;width:1680px;height:1px;background:#ddd"></div><div style="position:absolute;left:269.3px;top:682.3px;width:10.5px;height:10.5px;box-sizing:border-box;border:1px solid #5a5a5a;border-radius:2px;background:#fff"></div><div class="t" style="left:302px;top:679.26px;font-size:13.5px;color:#2f72b6;font-weight:normal;">test vdi 3</div><div class="t" style="left:383px;top:679.26px;font-size:13.5px;color:#2f72b6;font-weight:normal;">7fdb880a-09c5-48e9-925c-6a90c4f528f1</div><div class="t" style="left:836px;top:679.26px;font-size:13.5px;color:#2f72b6;font-weight:normal;">mnode1.dev-cnt7q-ovs-03.stand.loc</div><div class="t" style="left:1103px;top:679.26px;font-size:13.5px;color:#333;font-weight:normal;">new</div><div class="t" style="left:1241px;top:679.26px;font-size:13.5px;color:#333;font-weight:normal;">VDI</div><div class="t" style="left:1321px;top:679.26px;font-size:13.5px;color:#333;font-weight:normal;">192.168.1.5</div><div class="t" style="left:1429px;top:679.26px;font-size:13.5px;color:#333;font-weight:normal;">Нет</div><div class="t" style="left:1505px;top:679.26px;font-size:13.5px;color:#333;font-weight:normal;">Активна</div><svg style="position:absolute;left:1586px;top:680.6px" width="13" height="10" viewBox="0 0 13 10"><rect x="0" y="4.5" width="8.8" height="5.5" fill="#bbb"/><path d="M6.2,4.8 V3.2 A2.7,2.7 0 0 1 11.6,3.2 V4.3" stroke="#bbb" stroke-width="1.6" fill="none"/></svg><div class="t" style="left:1622px;top:679.26px;font-size:13.5px;color:#333;font-weight:normal;">Включено</div><div style="position:absolute;left:1716px;top:671px;width:157px;height:30px;background:#428bca;border-radius:3px 0 0 3px"></div><div class="t" style="left:1727px;top:679.02px;font-size:13.0px;color:#fff;font-weight:normal;">Архивировать машину</div><div style="position:absolute;left:1872px;top:671px;width:24px;height:30px;box-sizing:border-box;background:#fff;border:1px solid #ccc;border-left:none;border-radius:0 3px 3px 0;"></div><div style="position:absolute;left:1880px;top:684px;border-left:4px solid transparent;border-right:4px solid transparent;border-top:4px solid #333"></div><div style="position:absolute;left:255px;top:756px;width:1680px;height:1px;background:#ddd"></div><div style="position:absolute;left:269.3px;top:729.3px;width:10.5px;height:10.5px;box-sizing:border-box;border:1px solid #5a5a5a;border-radius:2px;background:#fff"></div><div class="t" style="left:302px;top:726.26px;font-size:13.5px;color:#2f72b6;font-weight:normal;">test vdi 2</div><div class="t" style="left:383px;top:726.26px;font-size:13.5px;color:#2f72b6;font-weight:normal;">7707de57-126d-4bbb-a00b-8135110d9a09</div><div class="t" style="left:836px;top:726.26px;font-size:13.5px;color:#2f72b6;font-weight:normal;">mnode1.dev-cnt7q-ovs-03.stand.loc</div><div class="t" style="left:1103px;top:726.26px;font-size:13.5px;color:#333;font-weight:normal;">new</div><div class="t" style="left:1241px;top:726.26px;font-size:13.5px;color:#333;font-weight:normal;">VDI</div><div class="t" style="left:1321px;top:726.26px;font-size:13.5px;color:#333;font-weight:normal;">192.168.1.23</div><div class="t" style="left:1429px;top:726.26px;font-size:13.5px;color:#333;font-weight:normal;">Нет</div><div class="t" style="left:1505px;top:726.26px;font-size:13.5px;color:#333;font-weight:normal;">Активна</div><svg style="position:absolute;left:1586px;top:727.6px" width="13" height="10" viewBox="0 0 13 10"><rect x="0" y="4.5" width="8.8" height="5.5" fill="#bbb"/><path d="M6.2,4.8 V3.2 A2.7,2.7 0 0 1 11.6,3.2 V4.3" stroke="#bbb" stroke-width="1.6" fill="none"/></svg><div class="t" style="left:1622px;top:726.26px;font-size:13.5px;color:#333;font-weight:normal;">Включено</div><div style="position:absolute;left:1716px;top:718px;width:157px;height:30px;background:#428bca;border-radius:3px 0 0 3px"></div><div class="t" style="left:1727px;top:726.02px;font-size:13.0px;color:#fff;font-weight:normal;">Архивировать машину</div><div style="position:absolute;left:1872px;top:718px;width:24px;height:30px;box-sizing:border-box;background:#fff;border:1px solid #ccc;border-left:none;border-radius:0 3px 3px 0;"></div><div style="position:absolute;left:1880px;top:731px;border-left:4px solid transparent;border-right:4px solid transparent;border-top:4px solid #333"></div><div style="position:absolute;left:255px;top:757px;width:1680px;height:46px;background:#f9f9f9"></div><div style="position:absolute;left:255px;top:803px;width:1680px;height:1px;background:#ddd"></div><div style="position:absolute;left:269.3px;top:776.3px;width:10.5px;height:10.5px;box-sizing:border-box;border:1px solid #5a5a5a;border-radius:2px;background:#fff"></div><div class="t" style="left:302px;top:773.26px;font-size:13.5px;color:#2f72b6;font-weight:normal;">ts vdi 1</div><div class="t" style="left:383px;top:773.26px;font-size:13.5px;color:#2f72b6;font-weight:normal;">372ae8f9-3489-4866-9b04-8184b9823fbc</div><div class="t" style="left:836px;top:773.26px;font-size:13.5px;color:#2f72b6;font-weight:normal;">mnode1.dev-cnt7q-ovs-03.stand.loc</div><div class="t" style="left:1103px;top:773.26px;font-size:13.5px;color:#333;font-weight:normal;">new</div><div class="t" style="left:1241px;top:773.26px;font-size:13.5px;color:#333;font-weight:normal;">VDI</div><div class="t" style="left:1321px;top:773.26px;font-size:13.5px;color:#333;font-weight:normal;">192.168.1.14</div><div class="t" style="left:1429px;top:773.26px;font-size:13.5px;color:#333;font-weight:normal;">Нет</div><div class="t" style="left:1505px;top:773.26px;font-size:13.5px;color:#333;font-weight:normal;">Активна</div><svg style="position:absolute;left:1586px;top:774.6px" width="13" height="10" viewBox="0 0 13 10"><rect x="0" y="4.5" width="8.8" height="5.5" fill="#bbb"/><path d="M6.2,4.8 V3.2 A2.7,2.7 0 0 1 11.6,3.2 V4.3" stroke="#bbb" stroke-width="1.6" fill="none"/></svg><div class="t" style="left:1622px;top:773.26px;font-size:13.5px;color:#333;font-weight:normal;">Включено</div><div style="position:absolute;left:1716px;top:765px;width:157px;height:30px;background:#428bca;border-radius:3px 0 0 3px"></div><div class="t" style="left:1727px;top:773.02px;font-size:13.0px;color:#fff;font-weight:normal;">Архивировать машину</div><div style="position:absolute;left:1872px;top:765px;width:24px;height:30px;box-sizing:border-box;background:#fff;border:1px solid #ccc;border-left:none;border-radius:0 3px 3px 0;"></div><div style="position:absolute;left:1880px;top:778px;border-left:4px solid transparent;border-right:4px solid transparent;border-top:4px solid #333"></div><div style="position:absolute;left:255px;top:850px;width:1680px;height:1px;background:#ddd"></div><div style="position:absolute;left:269.3px;top:823.3px;width:10.5px;height:10.5px;box-sizing:border-box;border:1px solid #5a5a5a;border-radius:2px;background:#fff"></div><div class="t" style="left:302px;top:820.26px;font-size:13.5px;color:#2f72b6;font-weight:normal;">test pr 2</div><div class="t" style="left:383px;top:820.26px;font-size:13.5px;color:#2f72b6;font-weight:normal;">6770d529-1d5c-42b3-bde8-1329ba05dea1</div><div class="t" style="left:836px;top:820.26px;font-size:13.5px;color:#2f72b6;font-weight:normal;">mnode1.dev-cnt7q-ovs-03.stand.loc</div><div class="t" style="left:1103px;top:820.26px;font-size:13.5px;color:#333;font-weight:normal;">new</div><div class="t" style="left:1241px;top:820.26px;font-size:13.5px;color:#333;font-weight:normal;">Типовая</div><div class="t" style="left:1321px;top:820.26px;font-size:13.5px;color:#333;font-weight:normal;">192.168.1.7</div><div class="t" style="left:1429px;top:820.26px;font-size:13.5px;color:#333;font-weight:normal;">Нет</div><div class="t" style="left:1505px;top:820.26px;font-size:13.5px;color:#333;font-weight:normal;">Активна</div><svg style="position:absolute;left:1586px;top:821.6px" width="13" height="10" viewBox="0 0 13 10"><rect x="0" y="4.5" width="8.8" height="5.5" fill="#bbb"/><path d="M6.2,4.8 V3.2 A2.7,2.7 0 0 1 11.6,3.2 V4.3" stroke="#bbb" stroke-width="1.6" fill="none"/></svg><div class="t" style="left:1622px;top:820.26px;font-size:13.5px;color:#333;font-weight:normal;">Включено</div><div style="position:absolute;left:1716px;top:812px;width:157px;height:30px;background:#428bca;border-radius:3px 0 0 3px"></div><div class="t" style="left:1727px;top:820.02px;font-size:13.0px;color:#fff;font-weight:normal;">Архивировать машину</div><div style="position:absolute;left:1872px;top:812px;width:24px;height:30px;box-sizing:border-box;background:#fff;border:1px solid #ccc;border-left:none;border-radius:0 3px 3px 0;"></div><div style="position:absolute;left:1880px;top:825px;border-left:4px solid transparent;border-right:4px solid transparent;border-top:4px solid #333"></div><div class="t" style="left:270px;top:867.56px;font-size:13.5px;color:#333;font-weight:normal;">Отображено 12 элементов из 12</div><div style="position:absolute;left:1672px;top:327px;width:224px;height:403px;box-sizing:border-box;background:#fff;border:1px solid rgba(0,0,0,.2);border-radius:4px;box-shadow:0 6px 12px rgba(0,0,0,.175)"></div><div class="t" style="left:1693px;top:338.29px;font-size:12.6px;color:#d9534f;font-weight:normal;">Выключить машину</div><div class="t" style="left:1693px;top:361.29px;font-size:12.6px;color:#428bca;font-weight:normal;">Дополнительно</div><div class="t" style="left:1693px;top:384.29px;font-size:12.6px;color:#d9534f;font-weight:normal;">Жесткая перезагрузка машины</div><div class="t" style="left:1693px;top:407.29px;font-size:12.6px;color:#d9534f;font-weight:normal;">Живая миграция машины</div><div class="t" style="left:1693px;top:430.29px;font-size:12.6px;color:#428bca;font-weight:normal;">Запланировать действие</div><div class="t" style="left:1693px;top:453.29px;font-size:12.6px;color:#428bca;font-weight:normal;">Клонировать машину</div><div class="t" style="left:1693px;top:476.29px;font-size:12.6px;color:#428bca;font-weight:normal;">Консоль</div><div class="t" style="left:1693px;top:499.29px;font-size:12.6px;color:#d9534f;font-weight:normal;">Миграция машины</div><div class="t" style="left:1693px;top:522.29px;font-size:12.6px;color:#d9534f;font-weight:normal;">Мягкая перезагрузка машины</div><div class="t" style="left:1693px;top:545.29px;font-size:12.6px;color:#428bca;font-weight:normal;">Показать статистику</div><div class="t" style="left:1693px;top:568.29px;font-size:12.6px;color:#428bca;font-weight:normal;">Посмотреть лог</div><div class="t" style="left:1693px;top:591.29px;font-size:12.6px;color:#d9534f;font-weight:normal;">Поставить на паузу машину</div><div class="t" style="left:1693px;top:614.29px;font-size:12.6px;color:#428bca;font-weight:normal;">Приостановить машину</div><div class="t" style="left:1693px;top:637.29px;font-size:12.6px;color:#428bca;font-weight:normal;">Редактировать машину</div><div class="t" style="left:1693px;top:660.29px;font-size:12.6px;color:#428bca;font-weight:normal;">Создать образ</div><div class="t" style="left:1693px;top:683.29px;font-size:12.6px;color:#428bca;font-weight:normal;">Создать снимок</div><div class="t" style="left:1693px;top:706.29px;font-size:12.6px;color:#d9534f;font-weight:normal;">Удалить машину</div><svg style="position:absolute;left:1576px;top:428px" width="102" height="14" viewBox="0 0 102 14"><rect x="1.8" y="5" width="86" height="4" fill="#f00"/><path d="M86,3 L99.5,7 L86,11 Z" fill="#f00"/></svg>
</body></html>
